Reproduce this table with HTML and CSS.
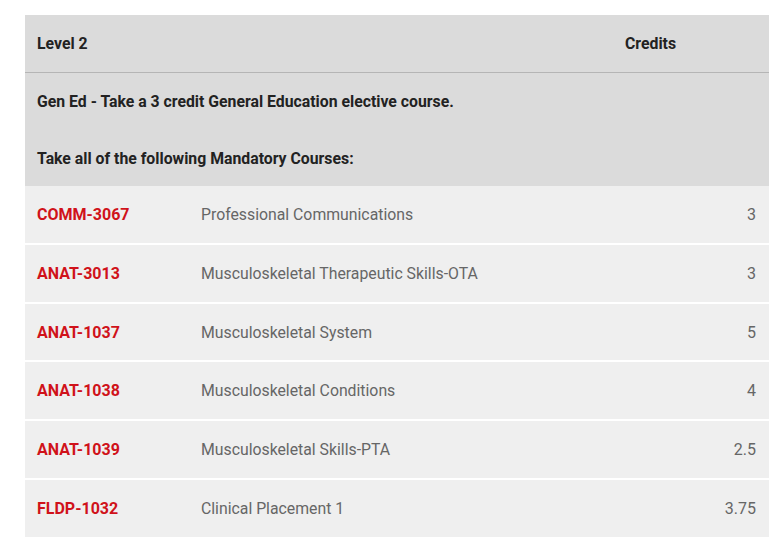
FILE: index.html
```html
<!DOCTYPE html>
<html>
<head>
<meta charset="utf-8">
<link rel="stylesheet" href="styles.css">
</head>
<body>
<table class="courses">
  <colgroup>
    <col class="col-code">
    <col class="col-name">
    <col class="col-credits">
  </colgroup>
  <thead>
    <tr class="head-row">
      <th>Level 2</th>
      <th></th>
      <th>Credits</th>
    </tr>
  </thead>
  <tbody>
    <tr class="group-row"><td colspan="3">Gen Ed - Take a 3 credit General Education elective course.</td></tr>
    <tr class="group-row"><td colspan="3">Take all of the following Mandatory Courses:</td></tr>
    <tr class="course"><td class="code">COMM-3067</td><td class="name">Professional Communications</td><td class="cr">3</td></tr>
    <tr class="course"><td class="code">ANAT-3013</td><td class="name">Musculoskeletal Therapeutic Skills-OTA</td><td class="cr">3</td></tr>
    <tr class="course"><td class="code">ANAT-1037</td><td class="name">Musculoskeletal System</td><td class="cr">5</td></tr>
    <tr class="course"><td class="code">ANAT-1038</td><td class="name">Musculoskeletal Conditions</td><td class="cr">4</td></tr>
    <tr class="course"><td class="code">ANAT-1039</td><td class="name">Musculoskeletal Skills-PTA</td><td class="cr">2.5</td></tr>
    <tr class="course"><td class="code">FLDP-1032</td><td class="name">Clinical Placement 1</td><td class="cr">3.75</td></tr>
  </tbody>
</table>
</body>
</html>
```

FILE: styles.css
```css
html, body {
  margin: 0;
  padding: 0;
  background: #fff;
}
body {
  padding: 15px 0 0 25px;
  font-family: Roboto, "Liberation Sans", Arial, sans-serif;
}
.courses {
  width: 744px;
  border-collapse: collapse;
  table-layout: fixed;
}
.col-code { width: 164px; }
.col-name { width: 424px; }
.col-credits { width: 156px; }

.head-row th {
  background: #dbdbdb;
  color: #222;
  font-size: 15.8px;
  font-weight: 700;
  text-align: left;
  padding: 16px 12px;
  line-height: 25px;
  border-bottom: 1px solid #b5b5b5;
}
.group-row td {
  background: #dbdbdb;
  color: #222;
  font-size: 15.8px;
  font-weight: 700;
  padding: 17px 12px 15px;
  line-height: 24.5px;
}
.course td {
  background: #efefef;
  font-size: 16px;
  padding: 17px 12px 15px;
  line-height: 24.8px;
  border-bottom: 2px solid #fff;
}
.course .code {
  color: #d0121a;
  font-weight: 700;
}
.course .name {
  color: #666;
  font-size: 15.8px;
}
.course .cr {
  color: #666;
  text-align: right;
  padding-right: 13px;
}
```
